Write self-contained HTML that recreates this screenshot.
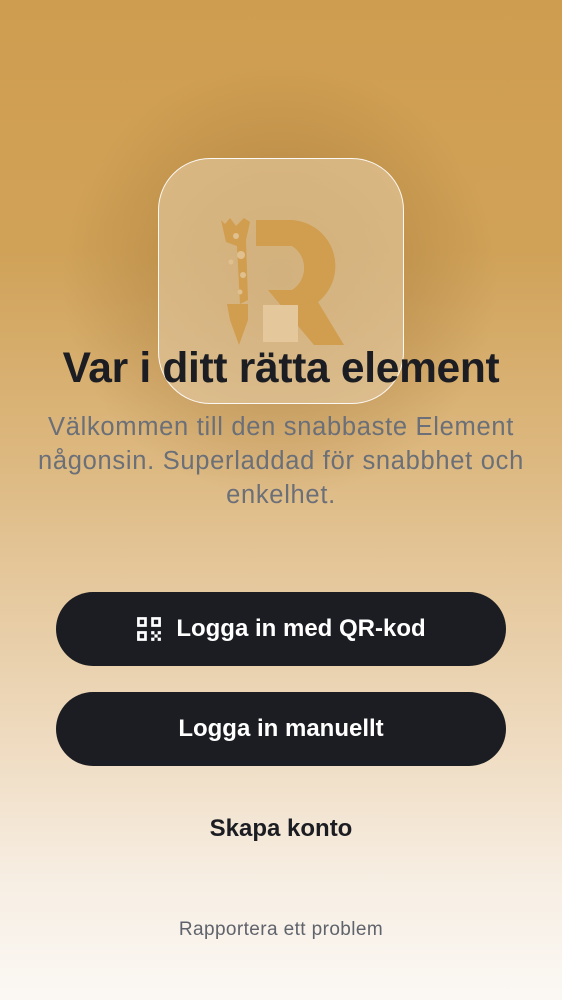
<!DOCTYPE html>
<html><head><meta charset="utf-8"><style>
html,body{margin:0;padding:0}
body{width:562px;height:1000px;position:relative;overflow:hidden;font-family:"Liberation Sans",sans-serif;
background:linear-gradient(180deg,#cf9d50 0%,#d0a258 25%,#dcb77e 45%,#e6caa0 60%,#efdcc2 75%,#f7eee3 88%,#fbf8f4 100%);}
.glow{position:absolute;left:60px;top:60px;width:440px;height:440px;border-radius:50%;background:radial-gradient(circle,rgba(150,105,45,0.5) 0%,rgba(150,105,45,0.25) 40%,rgba(150,105,45,0) 70%);}
.box{position:absolute;left:158px;top:158px;width:244px;height:244px;border-radius:52px;border:1px solid rgba(255,255,255,0.9);background:rgba(230,205,165,0.6);}
h1{position:absolute;top:345px;left:0;width:562px;text-align:center;margin:0;font-size:42.5px;font-weight:bold;color:#1b1d22;letter-spacing:-0.3px}
.sub{position:absolute;top:410px;left:0;width:562px;text-align:center;font-size:25.5px;line-height:34px;color:#6b6f78;letter-spacing:0.7px}
.btn{position:absolute;left:56px;width:450px;height:74px;border-radius:37px;background:#1b1d22;color:#fff;font-size:24px;font-weight:bold;display:flex;align-items:center;justify-content:center}
.link{position:absolute;left:0;width:562px;text-align:center}
</style></head><body>
<div class="glow"></div>
<div class="box"></div>
<svg style="position:absolute;left:0;top:0" width="562" height="400">
 <g fill="#d19d4f">
  <path d="M256 220 H290 A46 46 0 0 1 318 302 L344 345 H314 L268 290 H292 A26 26 0 0 0 292 246 H256 Z"/>
  <path d="M221 220 L225 224 L230 218 L236 226 L244 218 L250 222 L246 240 L248 300 L240 304 L237 246 L226 242 Z"/>
  <path d="M227 304 H248 L248 320 L239 345 L230 320 Z"/>
 </g>
 <rect x="263" y="305" width="35" height="37" fill="#e5c79c"/>
 <g fill="#e0c08e"><circle cx="236" cy="236" r="3"/><circle cx="241" cy="255" r="4"/><circle cx="231" cy="262" r="2.5"/><circle cx="243" cy="275" r="3"/><circle cx="240" cy="292" r="2.5"/></g>
</svg>
<h1>Var i ditt rätta element</h1>
<div class="sub">Välkommen till den snabbaste Element någonsin. Superladdad för snabbhet och enkelhet.</div>
<div class="btn" style="top:592px"><svg width="26" height="26" viewBox="0 0 24 24" style="margin-right:14px" fill="#fff"><path d="M1 1h9v9H1zM3.5 3.5v4h4v-4zM14 1h9v9h-9zM16.5 3.5v4h4v-4zM1 14h9v9H1zM3.5 16.5v4h4v-4z"/><path d="M14 14h3v3h-3zM20 14h3v3h-3zM17 17h3v3h-3zM14 20h3v3h-3zM20 20h3v3h-3z"/></svg>Logga in med QR-kod</div>
<div class="btn" style="top:692px">Logga in manuellt</div>
<div class="link" style="top:815px;font-size:24px;font-weight:bold;color:#1b1d22">Skapa konto</div>
<div class="link" style="top:919px;font-size:19px;letter-spacing:0.4px;color:#5f636b">Rapportera ett problem</div>
</body></html>
